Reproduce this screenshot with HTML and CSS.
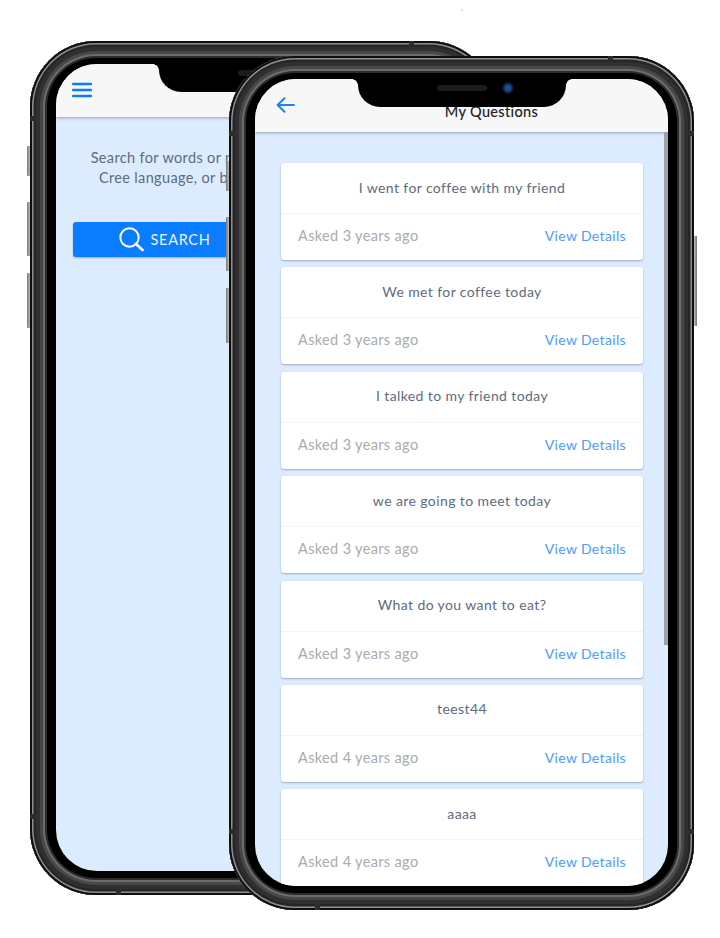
FILE: index.html
```html
<!DOCTYPE html>
<html lang="en">
<head>
    <meta charset="UTF-8">
    <meta name="viewport" content="width=device-width, initial-scale=1.0">
    <title>My Questions</title>
    <link rel="stylesheet" href="styles.css">
</head>
<body>
    <div class="speck"></div>

    <!-- back phone: search screen -->
    <div class="phone phone-back">
        <span class="side-btn btn-a"></span>
        <span class="side-btn btn-b"></span>
        <span class="side-btn btn-c"></span>
        <span class="side-btn btn-power"></span>
        <span class="tick tick-top"></span>
        <span class="tick tick-bottom"></span>
        <span class="tick tick-left-a"></span>
        <span class="tick tick-left-b"></span>
        <span class="tick tick-right-a"></span>
        <span class="tick tick-right-b"></span>
        <div class="screen">
            <div class="notch"><span class="speaker"></span><span class="camera"></span></div>
            <header class="top-bar">
                <svg class="menu-icon" width="20" height="16" viewBox="0 0 20 16">
                    <path d="M1 2h18M1 8h18M1 14h18" stroke="#0a7cff" stroke-width="2.4" stroke-linecap="round"/>
                </svg>
            </header>
            <main class="search-body">
                <p class="intro">Search for words or phrases<br>Cree language, or browse</p>
                <button class="search-btn" type="button">
                    <svg width="26" height="26" viewBox="0 0 26 26">
                        <circle cx="11.5" cy="11.5" r="9.2" fill="none" stroke="#fff" stroke-width="2"/>
                        <path d="M18 18l6.5 6" stroke="#fff" stroke-width="2.6" stroke-linecap="round"/>
                    </svg>
                    SEARCH
                </button>
            </main>
        </div>
    </div>

    <!-- front phone: question list -->
    <div class="phone phone-front">
        <span class="side-btn btn-a"></span>
        <span class="side-btn btn-b"></span>
        <span class="side-btn btn-c"></span>
        <span class="side-btn btn-power"></span>
        <span class="tick tick-top"></span>
        <span class="tick tick-bottom"></span>
        <span class="tick tick-left-a"></span>
        <span class="tick tick-left-b"></span>
        <span class="tick tick-right-a"></span>
        <span class="tick tick-right-b"></span>
        <div class="screen">
            <div class="notch"><span class="speaker"></span><span class="camera"></span></div>
            <header class="top-bar">
                <svg class="back-icon" width="19" height="16" viewBox="0 0 19 16">
                    <path d="M18 8H2M8.5 1.2L1.6 8l6.9 6.8" fill="none" stroke="#1e82f5" stroke-width="1.9" stroke-linecap="round" stroke-linejoin="round"/>
                </svg>
                <h1>My Questions</h1>
            </header>
            <main class="question-list">
                <span class="scrollbar"></span>
                <article class="card">
                    <p class="question">I went for coffee with my friend</p>
                    <div class="card-foot"><span>Asked 3 years ago</span><a>View Details</a></div>
                </article>
                <article class="card">
                    <p class="question">We met for coffee today</p>
                    <div class="card-foot"><span>Asked 3 years ago</span><a>View Details</a></div>
                </article>
                <article class="card">
                    <p class="question">I talked to my friend today</p>
                    <div class="card-foot"><span>Asked 3 years ago</span><a>View Details</a></div>
                </article>
                <article class="card">
                    <p class="question">we are going to meet today</p>
                    <div class="card-foot"><span>Asked 3 years ago</span><a>View Details</a></div>
                </article>
                <article class="card">
                    <p class="question">What do you want to eat?</p>
                    <div class="card-foot"><span>Asked 3 years ago</span><a>View Details</a></div>
                </article>
                <article class="card">
                    <p class="question">teest44</p>
                    <div class="card-foot"><span>Asked 4 years ago</span><a>View Details</a></div>
                </article>
                <article class="card">
                    <p class="question">aaaa</p>
                    <div class="card-foot"><span>Asked 4 years ago</span><a>View Details</a></div>
                </article>
            </main>
        </div>
    </div>
</body>
</html>
```

FILE: styles.css
```css
body {
    margin: 0;
    height: 938px;
    overflow: hidden;
    position: relative;
    background: #fff;
    font-family: Lato, "Open Sans", sans-serif;
}

.speck {
    position: absolute;
    left: 461px;
    top: 9px;
    width: 2px;
    height: 2px;
    background: #f3d9dc;
}

/* the two phones sit on a free canvas */
.phone {
    position: absolute;
    isolation: isolate; /* keeps the back notch under the front phone */
    width: 465px;
    height: 854px;
    box-sizing: border-box;
    padding: 23px 26px 24px;
    border-radius: 66px;
    background: #000;
    box-shadow:
        inset 0 0 0 2px #0e0e0e,
        inset 0 0 0 3.5px #8f8f8f,
        inset 0 0 0 6px #262626,
        inset 0 0 0 10px #303030,
        inset 0 0 0 13px #484848,
        inset 0 0 0 15px #6c6c6c,
        inset 0 0 0 17px #2c2c2c;
}

.phone-back {
    left: 30px;
    top: 41px;
}

.phone-front {
    left: 229px;
    top: 56px;
}

.side-btn {
    position: absolute;
    left: -3px;
    width: 3px;
    background: linear-gradient(to right, #777, #bbb);
    border-radius: 1px 0 0 1px;
}

.btn-a { top: 105px; height: 30px; }
.btn-b { top: 161px; height: 54px; }
.btn-c { top: 232px; height: 55px; }

.btn-power {
    left: auto;
    right: -3px;
    top: 180px;
    height: 90px;
    background: linear-gradient(to left, #777, #bbb);
}

/* antenna breaks in the metal band */
.tick {
    position: absolute;
    background: #2b2b2b;
}

.tick-top { left: 379px; top: 0; width: 5px; height: 6px; }
.tick-bottom { left: 86px; bottom: 0; width: 5px; height: 6px; }
.tick-left-a { left: 0; top: 75px; width: 6px; height: 5px; }
.tick-left-b { left: 0; bottom: 76px; width: 6px; height: 5px; }
.tick-right-a { right: 0; top: 75px; width: 6px; height: 5px; }
.tick-right-b { right: 0; bottom: 76px; width: 6px; height: 5px; }

.screen {
    position: relative;
    height: 100%;
    display: flex;
    flex-direction: column;
    overflow: hidden;
    border-radius: 41px;
    background: #dcebfd;
}

.notch {
    position: absolute;
    z-index: 2;
    top: 0;
    left: 103px;
    width: 208px;
    height: 28px;
    display: flex;
    justify-content: center;
    align-items: center;
    gap: 15px;
    padding: 0 0 10px 27px;
    box-sizing: border-box;
    background: #000;
    border-radius: 0 0 22px 22px;
}

/* small flare where the notch meets the top of the screen */
.notch::before,
.notch::after {
    content: "";
    position: absolute;
    top: 0;
    width: 6px;
    height: 6px;
}

.notch::before {
    left: -6px;
    background: radial-gradient(circle at 0 100%, transparent 5.5px, #000 6px);
}

.notch::after {
    right: -6px;
    background: radial-gradient(circle at 100% 100%, transparent 5.5px, #000 6px);
}

.speaker {
    width: 50px;
    height: 6px;
    border-radius: 3px;
    background: #1c1c1c;
}

.camera {
    width: 12px;
    height: 12px;
    border-radius: 50%;
    background: radial-gradient(circle, #1d4f9c 0 25%, #0d1626 60%);
}

.top-bar {
    position: relative;
    flex: none;
    height: 53px;
    background: #f7f7f7;
    box-shadow: 0 1px 3px rgba(60, 70, 90, 0.45);
}

.menu-icon {
    position: absolute;
    left: 16px;
    top: 18px;
}

.back-icon {
    position: absolute;
    left: 21px;
    top: 18px;
}

.top-bar h1 {
    margin: 0;
    padding: 24px 0 0 60px;
    text-align: center;
    font-size: 14.5px;
    font-weight: 500;
    line-height: 17px;
    letter-spacing: 0.35px;
    color: #222;
}

.search-body {
    padding: 31px 17px 0;
}

.intro {
    width: 221px;
    margin: 0 0 34px;
    text-align: center;
    white-space: nowrap;
    font-size: 14.5px;
    line-height: 20px;
    letter-spacing: 0.35px;
    color: #5d6b7e;
}

.search-btn {
    display: flex;
    justify-content: center;
    align-items: center;
    gap: 7px;
    width: 184px;
    height: 35px;
    padding: 0 2px 1px 0;
    border: none;
    border-radius: 3px;
    background: #0a7cff;
    color: #eaf3ff;
    font: inherit;
    font-size: 14.5px;
    letter-spacing: 0.7px;
    box-shadow: 0 1px 2px rgba(0, 0, 0, 0.25);
}

.question-list {
    position: relative;
    flex: 1;
    padding: 31px 25px 0 26px;
    display: flex;
    flex-direction: column;
    gap: 7.4px;
    overflow: hidden;
}

.scrollbar {
    position: absolute;
    right: 0;
    top: 0;
    width: 4px;
    height: 513px;
    background: #9da3a9;
}

.card {
    flex: none;
    height: 97px;
    display: flex;
    flex-direction: column;
    background: #fff;
    border-radius: 3px;
    box-shadow: 0 1px 2px rgba(70, 80, 100, 0.4);
}

.question {
    flex: none;
    box-sizing: border-box;
    height: 51px;
    margin: 0;
    padding-bottom: 2px;
    display: flex;
    justify-content: center;
    align-items: center;
    font-size: 14px;
    letter-spacing: 0.4px;
    color: #5d6b7e;
    border-bottom: 1px solid #f4f4f4;
}

.card-foot {
    flex: 1;
    display: flex;
    justify-content: space-between;
    align-items: center;
    padding: 0 17px 3px;
    font-size: 14.5px;
    letter-spacing: 0.35px;
    color: #a9abae;
}

.card-foot a {
    font-size: 14px;
    color: #4f9bf8;
}
```
